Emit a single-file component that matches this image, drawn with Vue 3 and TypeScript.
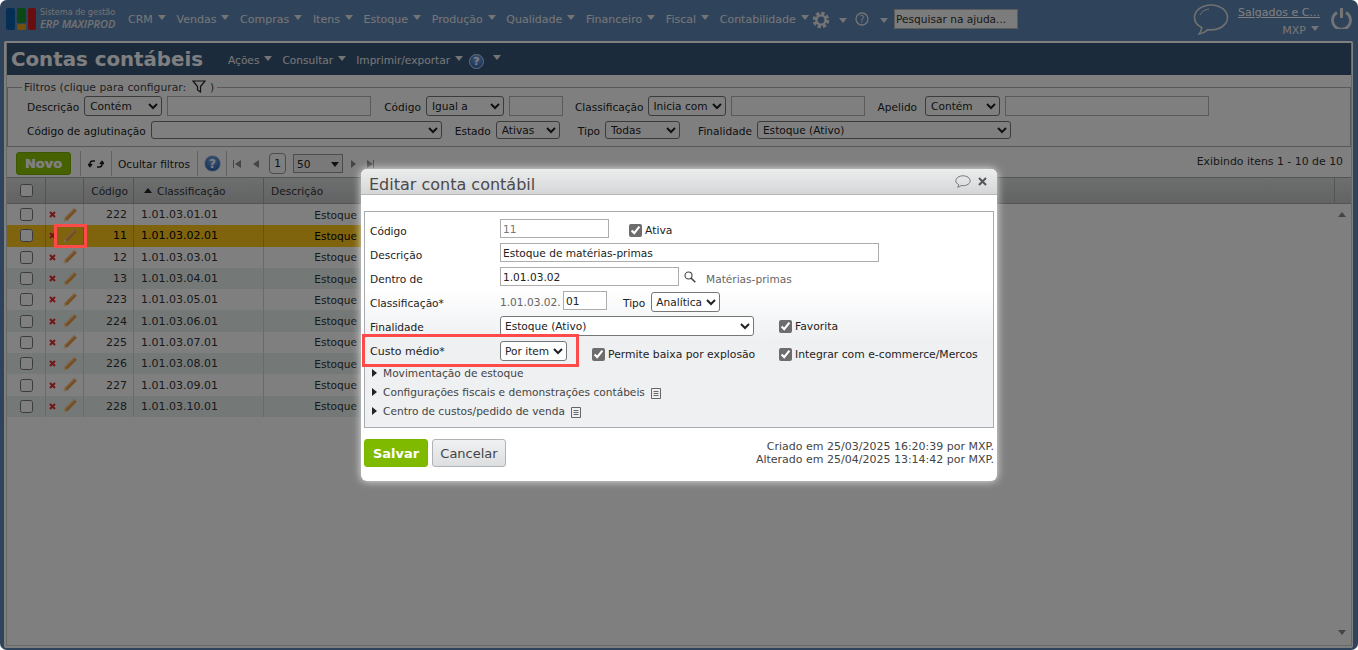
<script setup lang="ts">
const menus: string[] = ['CRM', 'Vendas', 'Compras', 'Itens', 'Estoque', 'Produção', 'Qualidade', 'Financeiro', 'Fiscal', 'Contabilidade']
const rows = [
  { code: 222, cls: '1.01.03.01.01' },
  { code: 11, cls: '1.01.03.02.01', sel: true },
  { code: 12, cls: '1.01.03.03.01' },
  { code: 13, cls: '1.01.03.04.01' },
  { code: 223, cls: '1.01.03.05.01' },
  { code: 224, cls: '1.01.03.06.01' },
  { code: 225, cls: '1.01.03.07.01' },
  { code: 226, cls: '1.01.03.08.01' },
  { code: 227, cls: '1.01.03.09.01' },
  { code: 228, cls: '1.01.03.10.01' },
]
</script>

<template>
  <div class="page">
    <header class="topbar">
      <div class="logo">
        <i class="blk blue"></i>
        <span class="midcol"><i class="blk green"></i><i class="blk yellow"></i></span>
        <i class="blk red"></i>
      </div>
      <div class="brand">
        <span>Sistema de gestão</span>
        <em>ERP MAXIPROD</em>
      </div>
      <nav class="menu">
        <span v-for="m in menus" :key="m" class="mi">{{ m }}<i class="caret"></i></span>
      </nav>
      <svg class="gear" width="18" height="18" viewBox="0 0 18 18">
        <circle cx="9" cy="9" r="6.6" fill="none" stroke="#e8e8e8" stroke-width="3.4" stroke-dasharray="3.2 2"/>
        <circle cx="9" cy="9" r="4.6" fill="none" stroke="#e8e8e8" stroke-width="2.4"/>
      </svg>
      <i class="caret c-gear"></i>
      <svg class="qm" width="14" height="16" viewBox="0 0 14 16">
        <circle cx="7" cy="8" r="6" fill="none" stroke="#e8e8e8" stroke-width="1.3"/>
        <text x="7" y="11.6" font-size="10" text-anchor="middle" fill="#e8e8e8" font-family="DejaVu Sans">?</text>
      </svg>
      <i class="caret c-qm"></i>
      <input class="help-search" placeholder="Pesquisar na ajuda..." />
      <div class="right">
        <svg width="36" height="34" viewBox="0 0 36 34">
          <path d="M18 2C8.6 2 1.5 7.8 1.5 14.5c0 4.4 3 8 7.4 10.2-.4 2.4-1.4 4.4-2.8 6.3 3.6-.6 6.6-2.2 8.8-4.4 1 .2 2 .3 3.1.3 9.4 0 16.5-5.6 16.5-12.4S27.400 2 18 2z" fill="none" stroke="#e0e0e0" stroke-width="1.6"/>
          <path d="M7 12c1.500-3.500 5-5.500 9-6" fill="none" stroke="#e0e0e0" stroke-width="1"/>
        </svg>
        <div class="user">
          <a class="company">Salgados e C...</a>
          <span class="mxp">MXP<i class="caret"></i></span>
        </div>
        <svg class="power" width="21" height="21" viewBox="0 0 21 21">
          <path d="M6 4.500a9 9 0 1 0 9 0" fill="none" stroke="#e8e8e8" stroke-width="2.800"/>
          <path d="M10.500 0v10" stroke="#e8e8e8" stroke-width="3" fill="none"/>
        </svg>
      </div>
    </header>

    <main class="panel">
      <div class="inner">
        <div class="titlebar">
          <h1>Contas contábeis</h1>
          <span class="ti t1">Ações<i class="caret"></i></span>
          <span class="ti">Consultar<i class="caret"></i></span>
          <span class="ti">Imprimir/exportar<i class="caret"></i></span>
          <span class="help small">?</span>
          <i class="caret c-title"></i>
        </div>

        <fieldset class="filters">
          <legend>Filtros (clique para configurar:
            <svg width="14" height="13" viewBox="0 0 14 13"><path d="M1 1h12L8.500 6.500V12L5.500 10V6.500z" fill="none" stroke="#222" stroke-width="1.200"/></svg>
            )</legend>
          <div class="frow">
            <label class="l1">Descrição</label>
            <select class="s" style="width:78px"><option>Contém</option></select>
            <input class="f" style="width:204px" />
            <label class="l2">Código</label>
            <select class="s" style="width:78px"><option>Igual a</option></select>
            <input class="f" style="width:54px" />
            <label class="l2 lcl">Classificação</label>
            <select class="s" style="width:78px"><option>Inicia com</option></select>
            <input class="f" style="width:134px" />
            <label class="l2 lap">Apelido</label>
            <select class="s" style="width:75px"><option>Contém</option></select>
            <input class="f" style="width:204px" />
          </div>
          <div class="frow second">
            <label class="l1">Código de aglutinação</label>
            <select class="s" style="width:291px"><option></option></select>
            <label class="l2">Estado</label>
            <select class="s" style="width:64px"><option>Ativas</option></select>
            <label class="l2 gap18">Tipo</label>
            <select class="s" style="width:75px"><option>Todas</option></select>
            <label class="l2 gap18">Finalidade</label>
            <select class="s" style="width:254px"><option>Estoque (Ativo)</option></select>
          </div>
        </fieldset>

        <div class="toolbar">
          <button class="novo">Novo</button>
          <span class="sep sep-a"></span>
          <svg class="refresh" width="16" height="14" viewBox="0 0 16 14">
            <path d="M7 4H4.500C3 4 2 5.200 2 7v2M0 7l2 2.500L4 7M9 10h2.500c1.500 0 2.500-1.200 2.500-3V5M12 7l2-2.500L16 7" fill="none" stroke="#1c1c1c" stroke-width="1.500"/>
          </svg>
          <span class="sep sep-b"></span>
          <span class="hide">Ocultar filtros</span>
          <span class="sep sep-c"></span>
          <span class="help">?</span>
          <span class="sep sep-d"></span>
          <svg class="pg" width="34" height="10" viewBox="0 0 34 10"><path d="M1 1v8h1V1zM9 1L3 5l6 4zM27 1l-6 4 6 4z" fill="#8c8c8c"/></svg>
          <span class="pageno">1</span>
          <div class="pagesize"><span>50</span><i class="caret dark"></i></div>
          <svg class="pg2" width="24" height="10" viewBox="0 0 24 10"><path d="M0 1l5 4-5 4zM16 1l6 4-6 4zM22 1h1v8h-1z" fill="#8c8c8c"/></svg>
          <span class="count">Exibindo itens 1 - 10 de 10</span>
        </div>

        <div class="gridhead">
          <span class="c c0"><input type="checkbox" /></span>
          <span class="c c1"></span>
          <span class="c c2">Código</span>
          <span class="c c3"><i class="sort"></i>Classificação</span>
          <span class="c c4">Descrição</span>
          <span class="c c5"></span>
          <span class="c c6"></span>
        </div>
        <div class="gridbody">
          <div class="rows">
            <div v-for="(r, i) in rows" :key="r.code" class="row" :class="{ alt: i % 2 === 1, sel: r.sel }">
              <span class="c0 cell"><input type="checkbox" /></span>
              <span class="c1 cell acts">
                <svg width="7" height="7" viewBox="0 0 7 7"><path d="M1 1l5 5M6 1L1 6" stroke="#e82a33" stroke-width="2" fill="none"/></svg>
                <svg class="pencil" width="14" height="14" viewBox="0 0 14 14">
                  <path d="M11.200 .2l2.600 2.600L4 12.800 1.400 10.200z" fill="#ec9a44"/>
                  <path d="M1.400 10.200L.2 13.800 4 12.800z" fill="#f5d9a8"/>
                  <path d="M11.200 .2l1.100 1.100-9.800 9.800-1.100-1.100z" fill="#fcc07a"/>
                </svg>
              </span>
              <span class="c2 cell num">{{ r.code }}</span>
              <span class="c3 cell">{{ r.cls }}</span>
              <span class="c4 cell est">Estoque</span>
            </div>
          </div>
          <div class="scroll">
            <i class="tri up"></i>
            <i class="tri down"></i>
          </div>
        </div>
      </div>
    </main>

    <div class="dim"></div>
    <div class="mark mark-pencil"></div>

    <section class="modal">
      <div class="mhead">
        <h2>Editar conta contábil</h2>
        <svg width="16" height="13" viewBox="0 0 16 13"><path d="M8 .8C4 .8.800 3 .800 5.800c0 1.700 1.200 3.100 3 4-.1.900-.6 1.800-1.200 2.400 1.500-.2 2.700-.9 3.600-1.700.6.100 1.200.2 1.800.2 4 0 7.200-2.200 7.200-4.900S12 .8 8 .8z" fill="none" stroke="#777" stroke-width="1"/></svg>
        <svg class="close" width="9" height="9" viewBox="0 0 9 9"><path d="M1 1l7 7M8 1L1 8" stroke="#555" stroke-width="2" fill="none"/></svg>
      </div>
      <div class="mbody">
        <div class="box">
          <div class="mrow">
            <label class="ml">Código</label>
            <input class="mi-f ro" style="width:109px" value="11" />
            <label class="chk ativa"><input type="checkbox" checked />Ativa</label>
          </div>
          <div class="mrow">
            <label class="ml">Descrição</label>
            <input class="mi-f" style="width:379px" value="Estoque de matérias-primas" />
          </div>
          <div class="mrow">
            <label class="ml">Dentro de</label>
            <input class="mi-f" style="width:179px" value="1.01.03.02" />
            <svg class="lens" width="12" height="12" viewBox="0 0 12 12"><circle cx="4.500" cy="4.500" r="3.500" fill="none" stroke="#444" stroke-width="1.100"/><path d="M7 7l4.300 4.300" stroke="#444" stroke-width="1.600"/></svg>
            <span class="muted mp">Matérias-primas</span>
          </div>
          <div class="mrow">
            <label class="ml">Classificação*</label>
            <span class="muted pre">1.01.03.02.</span>
            <input class="mi-f" style="width:44px" value="01" />
            <label class="tipo">Tipo</label>
            <select class="ms" style="width:69px"><option>Analítica</option></select>
          </div>
          <div class="mrow">
            <label class="ml">Finalidade</label>
            <select class="ms" style="width:254px"><option>Estoque (Ativo)</option></select>
            <label class="chk fav"><input type="checkbox" checked />Favorita</label>
          </div>
          <div class="mrow custo">
            <label class="ml">Custo médio*</label>
            <select class="ms por" style="width:67px"><option>Por item</option></select>
            <label class="chk baixa"><input type="checkbox" checked />Permite baixa por explosão</label>
            <label class="chk integ"><input type="checkbox" checked />Integrar com e-commerce/Mercos</label>
          </div>
          <div class="tree"><i class="tcaret"></i>Movimentação de estoque</div>
          <div class="tree"><i class="tcaret"></i>Configurações fiscais e demonstrações contábeis
            <svg width="10" height="11" viewBox="0 0 10 11"><path d="M.5.500h9v10h-9zM2.500 3.500h5M2.500 5.500h5M2.500 7.500h5" fill="none" stroke="#666"/></svg>
          </div>
          <div class="tree"><i class="tcaret"></i>Centro de custos/pedido de venda
            <svg width="10" height="11" viewBox="0 0 10 11"><path d="M.5.500h9v10h-9zM2.500 3.500h5M2.500 5.500h5M2.500 7.500h5" fill="none" stroke="#666"/></svg>
          </div>
        </div>
        <div class="mfoot">
          <button class="salvar">Salvar</button>
          <button class="cancelar">Cancelar</button>
          <div class="audit">
            <div>Criado em 25/03/2025 16:20:39 por MXP.</div>
            <div>Alterado em 25/04/2025 13:14:42 por MXP.</div>
          </div>
        </div>
      </div>
      <div class="mark mark-custo"></div>
    </section>
  </div>
</template>

<style>
html, body { margin: 0; background: #fff; overflow: hidden; }
</style>

<style scoped>
.page {
  position: relative;
  width: 1358px;
  height: 650px;
  overflow: hidden;
  border-radius: 7px;
  background: #5e86b6;
  font-family: "DejaVu Sans", Verdana, sans-serif;
  font-size: 10.600px;
  color: #222;
  display: flex;
  flex-direction: column;
}
i { display: block; font-style: normal; }

/* top bar */
.topbar { height: 41px; flex: none; display: flex; align-items: flex-start; position: relative; color: #eee; }
.logo { display: flex; gap: 1px; margin: 8px 0 0 6px; width: 30px; height: 22px; }
.blk { border-radius: 2px; }
.blue { width: 9px; background: #0a5ea8; }
.midcol { width: 9px; margin: 0 1px; display: flex; flex-direction: column; gap: 1px; }
.green { flex: 1; background: #18902c; }
.yellow { height: 6px; background: #e6a21a; }
.red { width: 8px; background: #d21c1c; }
.brand { margin: 7px 0 0 4px; width: 88px; display: flex; flex-direction: column; color: #e4e4e4; }
.brand span { font-size: 8.100px; line-height: 10px; white-space: nowrap; }
.brand em { font-family: "Open Sans", sans-serif; font-size: 11px; line-height: 14px; white-space: nowrap; font-weight: 600; }
.menu { display: flex; margin-top: 13px; font-size: 11px; }
.mi { display: flex; align-items: baseline; white-space: nowrap; margin-right: 10.700px; line-height: 14px; }
.caret {
  width: 0; height: 0; flex: none;
  border-left: 4.500px solid transparent;
  border-right: 4.500px solid transparent;
  border-top: 5px solid #e8e8e8;
  margin-left: 5px;
  position: relative; top: -3px;
}
.caret.dark { border-top-color: #222; }
.gear { position: absolute; left: 812px; top: 11px; }
.c-gear { position: absolute; left: 834px; top: 18px; }
.qm { position: absolute; left: 855px; top: 11px; }
.c-qm { position: absolute; left: 875px; top: 18px; }
.help-search {
  position: absolute; left: 894px; top: 9px; width: 124px; height: 20px;
  box-sizing: border-box; border: 1px solid #bbb; background: #f8f8f8; padding: 0 1px;
  font: 10.600px "DejaVu Sans", sans-serif;
}
.help-search::placeholder { color: #333; opacity: 1; }
.right { position: absolute; left: 1193px; top: 3px; display: flex; }
.user { width: 81px; margin-left: 9px; text-align: right; font-size: 11px; }
.company { color: #fff; text-decoration: underline; display: block; line-height: 14px; margin-top: 3px; white-space: nowrap; }
.mxp { display: flex; justify-content: flex-end; align-items: baseline; line-height: 14px; margin-top: 4px; }
.power { margin: 5px 0 0 12px; }

/* panel */
.panel { flex: 1; margin: 0 5px 2px 4px; background: #fff; padding: 2px 1px 2px 2px; display: flex; min-height: 0; border-radius: 2px; }
.inner { flex: 1; border: 1px solid #d0d0d0; border-top: none; display: flex; flex-direction: column; min-width: 0; background: #fff; }
.titlebar { height: 32px; flex: none; box-sizing: border-box; padding-top: 2px; background: #365679; color: #eee; display: flex; align-items: center; }
.titlebar h1 { margin: 0 0 0 4px; font-size: 19.800px; line-height: 28px; font-weight: 700; width: 217px; white-space: nowrap; color: #fff; }
.ti { display: flex; align-items: baseline; margin-right: 10px; white-space: nowrap; }
.help {
  width: 17px; height: 17px; border-radius: 50%; flex: none;
  background: radial-gradient(circle at 50% 30%, #7aaae8, #1d55a8);
  color: #fff; font-weight: 700; font-size: 12px; line-height: 17px; text-align: center;
  border: 1px solid #cfe0f5; box-sizing: border-box;
}
.help.small { width: 15px; height: 15px; line-height: 14px; font-size: 11px; margin-left: -4px; position: relative; top: 1px; }
.c-title { margin-left: 9px; }

.filters {
  margin: 5px 0 0; padding: 0 0 0 19px; height: 67px; box-sizing: border-box;
  border: 1px solid #b0b0b0; flex: none; min-width: 0;
}
.filters legend { padding: 0 3px 0 2px; margin-left: -5px; color: #444; display: block; line-height: 12px; white-space: nowrap; font-size: 10.800px; }
.filters legend svg { vertical-align: -2px; margin: 0 1px 0 2px; }
.frow { display: flex; align-items: center; height: 24px; }
.frow label { white-space: nowrap; position: relative; top: 1px; }
.second .s { height: 18px; }
.l1 { margin-right: 5px; }
.l2 { margin: 0 5px 0 13px; }
.lcl { margin: 0 4px 0 12px; }
.lap { margin: 0 8px 0 13px; }
.gap18 { margin-left: 18px; }
.s, .f, .ms, .mi-f {
  box-sizing: border-box; font: 10.600px "DejaVu Sans", sans-serif; color: #222;
  border: 1px solid #777; border-radius: 3px; background: #fff; flex: none;
}
.s { height: 20px; padding: 0 0 0 1px; }
.f { height: 20px; margin-left: 5px; border: 1px solid #b5b5b5; border-radius: 0; padding: 0 2px; }

.toolbar { height: 30px; flex: none; display: flex; align-items: center; position: relative; padding-top: 3px; box-sizing: border-box; }
.novo {
  margin-left: 9px; width: 55px; height: 23px; box-sizing: border-box; flex: none; padding: 0;
  border: 1px solid #7aac00; border-radius: 3px; background: #8ac200; color: #fff;
  font: 700 13px "DejaVu Sans", sans-serif; text-shadow: 0 0 1px #fff;
}
.sep { width: 1px; height: 25px; background: #c4c4c4; flex: none; }
.sep-a { margin: 0 7px 0 9px; }
.sep-b { margin: 0 6px 0 7px; }
.sep-c { margin: 0 6px 0 6px; }
.sep-d { margin: 0 5px 0 5px; }
.refresh { flex: none; }
.hide { white-space: nowrap; width: 73px; flex: none; }
.pg { flex: none; margin-right: 3px; }
.pageno { width: 17px; height: 21px; box-sizing: border-box; border: 1px solid #999; border-radius: 4px; text-align: center; line-height: 19px; flex: none; }
.pagesize { margin-left: 7px; width: 50px; height: 19px; box-sizing: border-box; border: 1px solid #999; display: flex; align-items: center; padding-left: 3px; background: #f2f2f2; }
.pagesize span { flex: 1; }
.pagesize .caret { top: 1px; margin-right: 3px; }
.pg2 { margin-left: 8px; flex: none; }
.count { position: absolute; right: 8px; top: 8px; color: #333; white-space: nowrap; font-size: 10.900px; }

.gridhead { height: 27px; flex: none; display: flex; background: linear-gradient(#dcdddd, #c4c6c8); border-top: 1px solid #a8a8a8; border-bottom: 1px solid #a8a8a8; box-sizing: border-box; color: #333; }
.gridhead .c { border-right: 1px solid #a8a8a8; box-sizing: border-box; display: flex; align-items: center; white-space: nowrap; flex: none; }
.c0 { width: 39px; justify-content: center; }
.c1 { width: 38px; }
.c2 { width: 50px; }
.c3 { width: 130px; }
.c4 { width: 100px; }
.gridhead .c2 { justify-content: flex-end; padding-right: 5px; }
.gridhead .c3 { padding-left: 10px; }
.gridhead .c4 { padding-left: 7px; }
.gridhead .c5 { flex: 1; }
.gridhead .c6 { width: 16px; border-right: none; }
.sort { width: 0; height: 0; border-left: 4px solid transparent; border-right: 4px solid transparent; border-bottom: 5px solid #222; margin-right: 5px; }
.gridhead input, .row input { margin: 0; }

.gridbody { flex: 1; display: flex; min-height: 0; }
.rows { flex: 1; }
.row { height: 21.300px; width: 600px; display: flex; align-items: center; background: #fff; }
.row.alt { background: #e9f3f0; }
.row.sel { background: #ffc81a; color: #000; }
.cell { display: flex; align-items: center; height: 100%; box-sizing: border-box; border-right: 1px solid #d4d4d4; white-space: nowrap; flex: none; color: #333; font-size: 11px; }
.row.sel .cell { color: #000; border-right-color: #d0a81e; }
.acts { gap: 7px; padding-left: 3px; }
.num { justify-content: flex-end; padding-right: 6px; }
.c3.cell { padding-left: 7px; }
.est { justify-content: flex-end; padding-right: 7px; border-right: none; font-size: 10.600px; }
.scroll { width: 16px; position: relative; }
.tri { position: absolute; left: 3px; width: 0; height: 0; border-left: 4.500px solid transparent; border-right: 4.500px solid transparent; }
.up { top: 8px; border-bottom: 5px solid #888; }
.down { bottom: 10px; border-top: 5px solid #888; }

/* modal */
.dim { position: absolute; inset: 0; background: rgba(0,0,0,.5); }
.mark { position: absolute; border: 3px solid #ff4a4a; box-sizing: border-box; }
.mark-pencil { left: 54px; top: 224px; width: 33px; height: 24px; }
.modal {
  position: absolute; left: 361px; top: 169px; width: 636px; height: 312px;
  background: #fff; border-radius: 6px; box-shadow: 0 0 8px rgba(255,255,255,.85);
  display: flex; flex-direction: column;
}
.mhead {
  height: 26px; flex: none; box-sizing: border-box; padding: 0 10px 0 8px;
  display: flex; align-items: center; border-bottom: 1px solid #b4b6b8; border-radius: 6px 6px 0 0;
  background: linear-gradient(#eceded, #d4d6d8);
}
.mhead h2 { margin: 0; flex: 1; font-size: 16px; font-weight: 400; color: #4a4a4a; line-height: 26px; padding-top: 6px; }
.close { margin-left: 7px; }
.mbody { flex: 1; padding: 16px 3px 0; }
.box { height: 217px; box-sizing: border-box; border: 1px solid #a8acb0; padding: 6px 0 0 5px; background: linear-gradient(#fff, #fff 35%, #eef0f2 60%); }
.mrow { height: 24px; display: flex; align-items: center; }
.ml { width: 130px; flex: none; position: relative; top: 1px; }
.mi-f { height: 19px; border: 1px solid #adadad; border-radius: 0; padding: 0 2px; margin-bottom: 3px; }
.ro { color: #777; }
.ms { height: 20px; padding: 0; margin-bottom: 1px; }
.por { height: 20px; margin: 1px 0 0; }
.chk { display: flex; align-items: center; white-space: nowrap; font-size: 10.800px; }
.chk input { margin: 0 3px 0 0; accent-color: #6d6d6d; width: 13px; height: 13px; }
.ativa { margin-left: 20px; }
.fav { margin-left: 25px; }
.baixa { margin-left: 25px; width: 187px; margin-top: 7px; }
.integ { margin-top: 7px; }
.muted { color: #666; }
.lens { margin-left: 5px; flex: none; margin-bottom: 3px; }
.mp { margin-left: 10px; position: relative; top: 1px; }
.pre { width: 63px; flex: none; white-space: nowrap; }
.tipo { margin: 0 6px 0 16px; position: relative; top: 1px; }
.custo { height: 25px; }
.custo .ml { font-size: 11px; }
.tree { height: 19px; display: flex; align-items: center; color: #444; white-space: nowrap; margin-left: 1px; }
.tree svg { margin-left: 6px; position: relative; top: 2px; }
.tcaret { width: 0; height: 0; border-top: 4px solid transparent; border-bottom: 4px solid transparent; border-left: 5px solid #222; margin: 0 6px 0 1px; }
.mfoot { display: flex; align-items: flex-start; margin-top: 11px; }
.salvar {
  width: 64px; height: 28px; padding: 0; box-sizing: border-box; border: 1px solid #7ab800; border-radius: 3px;
  background: #80ba00; color: #fff; font: 700 13px "DejaVu Sans", sans-serif;
}
.cancelar {
  width: 74px; height: 28px; margin-left: 4px; padding: 0; box-sizing: border-box;
  border: 1px solid #b0b3b6; border-radius: 3px; background: linear-gradient(#f0f1f2, #dcdee0);
  color: #444; font: 13px "DejaVu Sans", sans-serif;
}
.audit { margin-left: auto; text-align: right; color: #444; line-height: 13px; margin-top: 1px; font-size: 11px; }
.mark-custo { left: 1px; top: 165px; width: 217px; height: 33px; }
</style>
